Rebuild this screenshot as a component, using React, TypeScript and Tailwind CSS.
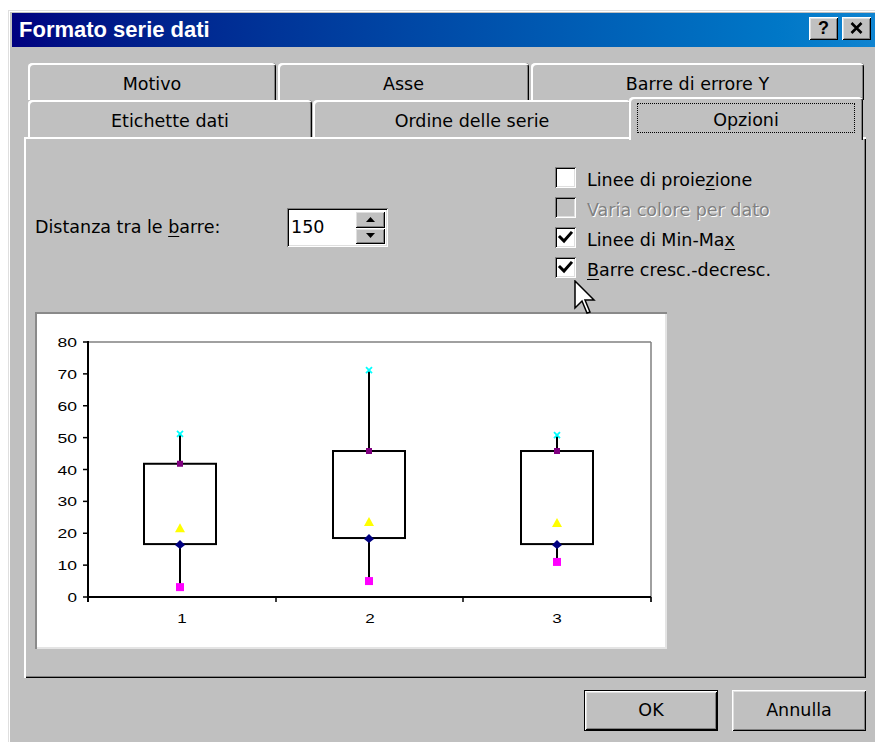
import React from "react";

const RAISED =
  "shadow-[inset_1px_1px_#ffffff,inset_-1px_-1px_#000000,inset_2px_2px_#dfdfdf,inset_-2px_-2px_#808080]";
const FIELD =
  "shadow-[inset_1px_1px_#808080,inset_-1px_-1px_#ffffff,inset_2px_2px_#000000,inset_-2px_-2px_#dfdfdf]";
const TAB =
  "shadow-[inset_2px_2px_#ffffff,inset_-1px_0_#000000,inset_-2px_0_#808080]";

type Candle = {
  x: number;
  high: number;
  top: number;
  bottom: number;
  low: number;
  mid: number;
};

const series: Candle[] = [
  { x: 145, high: 51.2, top: 41.8, bottom: 16.6, low: 3.1, mid: 21.6 },
  { x: 334, high: 71.2, top: 45.8, bottom: 18.5, low: 5, mid: 23.5 },
  { x: 522, high: 50.8, top: 45.8, bottom: 16.6, low: 11, mid: 23.2 },
];

// plot frame inside the preview (pixels)
const PL = 53;
const PR = 616;
const PT = 30;
const PB = 285;
const yOf = (v: number) => PB - (v * (PB - PT)) / 80;

function TitleButton({ children }: { children: React.ReactNode }) {
  return (
    <div
      className={`flex h-[23px] w-[29px] items-center justify-center bg-[#c0c0c0] ${RAISED}`}
    >
      {children}
    </div>
  );
}

function Tab({
  label,
  className,
}: {
  label: string;
  className: string;
}) {
  return (
    <div
      className={`flex items-center justify-center rounded-t-[4px] bg-[#c0c0c0] pt-[6px] ${TAB} ${className}`}
    >
      {label}
    </div>
  );
}

function CheckMark() {
  return (
    <svg width="17" height="17" viewBox="0 0 17 17">
      <polyline
        points="3,8 7,12 14,4"
        fill="none"
        stroke="#000000"
        strokeWidth="3"
        strokeLinecap="square"
      />
    </svg>
  );
}

function CheckRow({
  checked,
  disabled,
  children,
}: {
  checked?: boolean;
  disabled?: boolean;
  children: React.ReactNode;
}) {
  return (
    <div className="flex h-[30px] items-start gap-[11px]">
      <div
        className={`flex h-[21px] w-[21px] items-center justify-center ${
          disabled ? "bg-[#c0c0c0]" : "bg-white"
        } ${FIELD}`}
      >
        {checked && <CheckMark />}
      </div>
      <span
        className={`leading-[26px] ${
          disabled ? "text-[#808080] [text-shadow:1px_1px_0_#ffffff]" : "text-black"
        }`}
      >
        {children}
      </span>
    </div>
  );
}

function Spinner() {
  return (
    <div className={`flex h-[39px] w-[101px] items-center bg-white pl-[4px] pr-[3px] ${FIELD}`}>
      <span>150</span>
      <div className="ml-auto flex h-[33px] w-[30px] flex-col">
        <div className={`flex flex-1 items-center justify-center bg-[#c0c0c0] ${RAISED}`}>
          <svg width="9" height="5" viewBox="0 0 9 5">
            <polygon points="4.5,0 9,5 0,5" fill="#000000" />
          </svg>
        </div>
        <div className={`flex flex-1 items-center justify-center bg-[#c0c0c0] ${RAISED}`}>
          <svg width="9" height="5" viewBox="0 0 9 5">
            <polygon points="0,0 9,0 4.5,5" fill="#000000" />
          </svg>
        </div>
      </div>
    </div>
  );
}

function StockChart() {
  const ticks = [0, 10, 20, 30, 40, 50, 60, 70, 80];
  const catTicks = [53, 241, 428, 616];
  const labels = [
    { x: 147, t: "1" },
    { x: 335, t: "2" },
    { x: 522, t: "3" },
  ];
  return (
    <svg width="632" height="337" viewBox="0 0 632 337">
      {/* plot frame */}
      <line x1={PL} y1={PT} x2={PR} y2={PT} stroke="#808080" strokeWidth="1.5" />
      <line x1={PR} y1={PT} x2={PR} y2={PB + 5} stroke="#808080" strokeWidth="1.5" />
      {/* value axis */}
      <line x1={PL} y1={PT - 1} x2={PL} y2={PB + 5} stroke="#000000" strokeWidth="2" />
      {ticks.map((v) => (
        <g key={v}>
          <line x1={PL - 5} y1={yOf(v)} x2={PL} y2={yOf(v)} stroke="#000000" strokeWidth="1.5" />
          <text
            x={42}
            y={yOf(v) + 5}
            textAnchor="end"
            fontFamily="'Liberation Sans', Arial, sans-serif"
            fontSize="13.5"
            fill="#000000"
            textLength={v === 0 ? 9.5 : 19.5}
            lengthAdjust="spacingAndGlyphs"
          >
            {v}
          </text>
        </g>
      ))}
      {/* category axis */}
      <line x1={PL} y1={PB} x2={PR} y2={PB} stroke="#000000" strokeWidth="2" />
      {catTicks.map((x) => (
        <line key={x} x1={x} y1={PB} x2={x} y2={PB + 5} stroke="#000000" strokeWidth="1.5" />
      ))}
      {labels.map((l) => (
        <text
          key={l.t}
          x={l.x}
          y={311}
          textAnchor="middle"
          fontFamily="'Liberation Sans', Arial, sans-serif"
          fontSize="13.5"
          fill="#000000"
          textLength={9.5}
          lengthAdjust="spacingAndGlyphs"
        >
          {l.t}
        </text>
      ))}
      {series.map((c, i) => {
        const yh = yOf(c.high);
        const yt = yOf(c.top);
        const yb = yOf(c.bottom);
        const yl = yOf(c.low);
        const ym = yOf(c.mid);
        return (
          <g key={i}>
            <line x1={c.x} y1={yh} x2={c.x} y2={yt} stroke="#000000" strokeWidth="2" />
            <line x1={c.x} y1={yb} x2={c.x} y2={yl} stroke="#000000" strokeWidth="2" />
            <rect
              x={c.x - 36}
              y={yt}
              width="72"
              height={yb - yt}
              fill="none"
              stroke="#000000"
              strokeWidth="2"
            />
            {/* high: cyan cross */}
            <g stroke="#00ffff" strokeWidth="1.8">
              <line x1={c.x - 3} y1={yh - 3} x2={c.x + 3} y2={yh + 3} />
              <line x1={c.x + 3} y1={yh - 3} x2={c.x - 3} y2={yh + 3} />
            </g>
            {/* open: purple square */}
            <rect x={c.x - 3} y={yt - 3} width="6" height="6" fill="#800080" />
            {/* mid: yellow triangle */}
            <polygon
              points={`${c.x},${ym - 5} ${c.x + 5},${ym + 4} ${c.x - 5},${ym + 4}`}
              fill="#ffff00"
            />
            {/* close: navy diamond */}
            <polygon
              points={`${c.x},${yb - 4} ${c.x + 5},${yb + 1} ${c.x},${yb + 5} ${c.x - 5},${yb + 1}`}
              fill="#000080"
            />
            {/* low: magenta square */}
            <rect x={c.x - 4} y={yl - 4} width="8" height="8" fill="#ff00ff" />
          </g>
        );
      })}
    </svg>
  );
}

function Pointer() {
  return (
    <svg width="23" height="36" viewBox="0 0 23 36">
      <polygon
        points="1,1 1,28 8,21 13,33 16,32 11,20 20,20"
        fill="#ffffff"
        stroke="#000000"
        strokeWidth="1.5"
        strokeLinejoin="miter"
      />
    </svg>
  );
}

export default function App() {
  return (
    <div className="h-[742px] w-[875px] overflow-hidden bg-white font-['DejaVu_Sans',sans-serif] text-[17.5px] text-black">
      <div className="ml-[8px] mt-[10px] h-[740px] w-[880px] bg-[#c0c0c0] pl-[4px] pt-[3px] shadow-[inset_1px_1px_#dfdfdf,inset_2px_2px_#ffffff]">
        {/* caption */}
        <div className="flex h-[34px] w-[863px] items-center justify-between bg-linear-to-r from-[#000080] to-[#1084d0] pl-[7px] pr-[4px]">
          <span className="font-['Liberation_Sans',Arial,sans-serif] text-[22px] font-bold leading-none text-white">
            Formato serie dati
          </span>
          <div className="mb-[4px] flex gap-[4px]">
            <TitleButton>
              <span className="font-['Liberation_Sans',Arial,sans-serif] text-[18px] font-bold leading-none">
                ?
              </span>
            </TitleButton>
            <TitleButton>
              <svg width="13" height="12" viewBox="0 0 13 12">
                <path d="M1.5 1 L11.5 11 M11.5 1 L1.5 11" stroke="#000000" strokeWidth="2.6" />
              </svg>
            </TitleButton>
          </div>
        </div>

        <div className="mt-[16px] pl-[12px]">
          {/* tab rows */}
          <div className="ml-[4px] flex h-[37px] gap-[2px]">
            <Tab label="Motivo" className="w-[248px]" />
            <Tab label="Asse" className="w-[251px]" />
            <Tab label="Barre di errore Y" className="w-[333px]" />
          </div>
          <div className="ml-[4px] flex h-[37px] items-end gap-[1px]">
            <Tab label="Etichette dati" className="h-[37px] w-[284px]" />
            <Tab label="Ordine delle serie" className="h-[37px] w-[318px]" />
            <div
              className={`relative z-10 -ml-[3px] mb-[-3px] h-[43px] w-[234px] rounded-t-[4px] bg-[#c0c0c0] p-[6px_8px_7px_8px] ${TAB}`}
            >
              <div className="flex h-full w-full items-center justify-center border border-dotted border-black pt-[4px]">
                Opzioni
              </div>
            </div>
          </div>

          {/* page body */}
          <div className="relative h-[541px] w-[842px] bg-[#c0c0c0] pl-[11px] pt-[30px] shadow-[inset_2px_2px_#ffffff,inset_-1px_-1px_#000000,inset_-2px_-2px_#808080]">
            <div className="flex">
              <div className="w-[520px] pt-[41px]">
                <div className="flex items-center">
                  <span className="w-[252px]">
                    Distanza tra le <u className="underline-offset-[3px]">b</u>arre:
                  </span>
                  <Spinner />
                </div>
              </div>
              <div className="flex flex-col">
                <CheckRow>
                  Linee di proie<u className="underline-offset-[3px]">z</u>ione
                </CheckRow>
                <CheckRow disabled>Varia colore per dato</CheckRow>
                <CheckRow checked>
                  Linee di Min-Ma<u className="underline-offset-[3px]">x</u>
                </CheckRow>
                <CheckRow checked>
                  <u className="underline-offset-[3px]">B</u>arre cresc.-decresc.
                </CheckRow>
              </div>
            </div>

            <div className="mt-[25px] h-[337px] w-[632px] bg-white shadow-[inset_2px_2px_#8a8a8a,inset_-2px_-2px_#e4e4e4]">
              <StockChart />
            </div>

            <div className="absolute left-[550px] top-[143px]">
              <Pointer />
            </div>
          </div>

          {/* dialog buttons */}
          <div className="mt-[12px] flex w-[842px] justify-end gap-[14px]">
            <div className="h-[41px] w-[134px] border border-black">
              <div className={`flex h-full w-full items-center justify-center bg-[#c0c0c0] ${RAISED}`}>
                OK
              </div>
            </div>
            <div className={`flex h-[41px] w-[134px] items-center justify-center bg-[#c0c0c0] ${RAISED}`}>
              Annulla
            </div>
          </div>
        </div>
      </div>
    </div>
  );
}
